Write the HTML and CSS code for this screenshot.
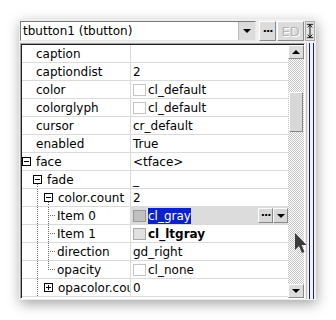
FILE: index.html
```html
<!DOCTYPE html>
<html lang="en">
<head>
  <meta charset="UTF-8">
  <title>Object inspector</title>
  <link rel="stylesheet" href="styles.css">
</head>
<body>
  <div class="desk">
    <div class="win">
      <div class="top">
        <div class="combo">
          <span class="combo-text">tbutton1 (tbutton)</span>
          <span class="combo-btn"><span class="tri-down"></span></span>
        </div>
        <span class="btn dots">&middot;&middot;&middot;</span>
        <span class="btn ed">ED</span>
        <span class="split-ico">
          <svg width="9" height="18" viewBox="0 0 9 18">
            <path d="M1 1.5h7M1 16.5h7M4.5 2v14M2 5l2.5-3 2.5 3M2 13l2.5 3 2.5-3" fill="none" stroke="#000" stroke-width="1"/>
          </svg>
        </span>
      </div>

      <div class="body">
        <div class="grid">
          <div class="rows">
            <div class="row"><div class="name"><span class="slot"></span><span class="txt">caption</span></div><div class="val"></div></div>
            <div class="row"><div class="name"><span class="slot"></span><span class="txt">captiondist</span></div><div class="val"><span class="txt">2</span></div></div>
            <div class="row"><div class="name"><span class="slot"></span><span class="txt">color</span></div><div class="val"><span class="sw"></span><span class="txt">cl_default</span></div></div>
            <div class="row"><div class="name"><span class="slot"></span><span class="txt">colorglyph</span></div><div class="val"><span class="sw"></span><span class="txt">cl_default</span></div></div>
            <div class="row"><div class="name"><span class="slot"></span><span class="txt">cursor</span></div><div class="val"><span class="txt">cr_default</span></div></div>
            <div class="row"><div class="name"><span class="slot"></span><span class="txt">enabled</span></div><div class="val"><span class="txt">True</span></div></div>
            <div class="row"><div class="name"><span class="slot"><span class="box minus"></span></span><span class="txt">face</span></div><div class="val"><span class="txt">&lt;tface&gt;</span></div></div>
            <div class="row"><div class="name"><span class="slot"></span><span class="slot down"><span class="box minus"></span></span><span class="txt">fade</span></div><div class="val"><span class="txt">_</span></div></div>
            <div class="row"><div class="name"><span class="slot"></span><span class="slot vl"></span><span class="slot down"><span class="box minus"></span></span><span class="txt">color.count</span></div><div class="val"><span class="txt">2</span></div></div>
            <div class="row"><div class="name"><span class="slot"></span><span class="slot vl"></span><span class="slot tee"></span><span class="txt leaf">Item 0</span></div>
              <div class="val sel"><span class="sw gray"></span><span class="txt hl">cl_gray</span><span class="fill"></span><span class="cbtn">&middot;&middot;&middot;</span><span class="cbtn"><span class="tri-down"></span></span></div></div>
            <div class="row"><div class="name"><span class="slot"></span><span class="slot vl"></span><span class="slot tee"></span><span class="txt leaf">Item 1</span></div><div class="val"><span class="sw ltgray"></span><span class="txt bold">cl_ltgray</span></div></div>
            <div class="row"><div class="name"><span class="slot"></span><span class="slot vl"></span><span class="slot tee"></span><span class="txt leaf">direction</span></div><div class="val"><span class="txt">gd_right</span></div></div>
            <div class="row"><div class="name"><span class="slot"></span><span class="slot vl"></span><span class="slot ell"></span><span class="txt leaf">opacity</span></div><div class="val"><span class="sw"></span><span class="txt">cl_none</span></div></div>
            <div class="row"><div class="name"><span class="slot"></span><span class="slot vl"></span><span class="slot"><span class="box plus"></span></span><span class="txt clip">opacolor.count</span></div><div class="val"><span class="txt">0</span></div></div>
          </div>
          <div class="vscroll">
            <span class="sbtn"><span class="tri-up"></span></span>
            <div class="track"><span class="thumb"></span></div>
            <span class="sbtn"><span class="tri-down"></span></span>
          </div>
        </div>
        <div class="splitter"></div>
      </div>
    </div>

    <svg class="cursor" width="12" height="22" viewBox="0 0 12 22">
      <path d="M0 0V17L4 13L7 20L9.5 19L6.5 12H11.5Z" fill="#3c3c3c"/>
    </svg>
  </div>
</body>
</html>
```

FILE: styles.css
```css
body {
  margin: 0;
  background: #ffffff;
  font-family: "DejaVu Sans", sans-serif;
  font-size: 12px;
  color: #000;
}

.desk {
  position: relative;
  width: 336px;
  height: 320px;
  padding: 19px 0 0 19px;
  box-sizing: border-box;
}

.win {
  width: 297px;
  height: 281px;
  box-sizing: border-box;
  padding: 2px 1px 1px 1px;
  background: #efefef;
  box-shadow: 1px 4px 12px rgba(0, 0, 0, 0.35);
  display: flex;
  flex-direction: column;
}

/* top bar */
.top {
  display: flex;
  height: 20px;
  gap: 1px;
}

.combo {
  width: 237px;
  box-sizing: border-box;
  display: flex;
  align-items: stretch;
  background: #fff;
  border: 1px solid;
  border-color: #7a7a7a #e8e8e8 #e8e8e8 #7a7a7a;
  margin-right: 2px;
}

.combo-text {
  flex: 1;
  padding-left: 2px;
  line-height: 18px;
}

.combo-btn {
  width: 16px;
  background: #dcdcdc;
  border-left: 1px solid #b8b8b8;
  display: flex;
  align-items: center;
  justify-content: center;
}

.tri-down,
.tri-up {
  width: 0;
  height: 0;
  border-left: 4px solid transparent;
  border-right: 4px solid transparent;
}

.tri-down {
  border-top: 4px solid #000;
}

.tri-up {
  border-bottom: 4px solid #000;
}

.btn {
  box-sizing: border-box;
  display: flex;
  align-items: center;
  justify-content: center;
  background: #dcdcdc;
  border: 1px solid;
  border-color: #fff #8a8a8a #8a8a8a #fff;
}

.dots {
  width: 17px;
  font-weight: bold;
  font-size: 11px;
  letter-spacing: -1px;
}

.ed {
  width: 27px;
  font-size: 13px;
  color: #b4b4b4;
  text-shadow: 1px 1px 0 #fff;
}

.split-ico {
  width: 10px;
  box-sizing: border-box;
  display: flex;
  align-items: center;
  justify-content: center;
  background: #e4e4e4;
  border: 1px solid #a8a8a8;
}

/* grid */
.body {
  flex: 1;
  display: flex;
  margin-top: 2px;
}

.grid {
  width: 285px;
  box-sizing: border-box;
  display: flex;
  border: 1px solid;
  border-color: #a0a0a0 #fff #fff #a0a0a0;
  box-shadow: inset 1px 1px 0 #202020;
  padding: 1px 0 0 1px;
}

.rows {
  width: 267px;
  background: #fff;
}

.row {
  display: flex;
  height: 17px;
  border-bottom: 1px solid #dadada;
}

.name {
  width: 108px;
  flex: none;
  display: flex;
  align-items: center;
  border-right: 1px solid #dadada;
  overflow: hidden;
  white-space: nowrap;
}

.slot {
  width: 11px;
  flex: none;
  align-self: stretch;
  display: flex;
  align-items: center;
}

.txt {
  margin-left: 3px;
}

.txt.leaf {
  margin-left: 2px;
}

.txt.clip {
  flex: 1;
  min-width: 0;
  overflow: hidden;
}

.vl {
  background: repeating-linear-gradient(#6e6e6e 0 1px, transparent 1px 2px) 4px 0 / 1px 100% no-repeat;
}

.down {
  background: repeating-linear-gradient(#6e6e6e 0 1px, transparent 1px 2px) 4px 13px / 1px 4px no-repeat;
}

.tee {
  background:
    repeating-linear-gradient(#6e6e6e 0 1px, transparent 1px 2px) 4px 0 / 1px 100% no-repeat,
    repeating-linear-gradient(90deg, #6e6e6e 0 1px, transparent 1px 2px) 6px 8px / 5px 1px no-repeat;
}

.ell {
  background:
    repeating-linear-gradient(#6e6e6e 0 1px, transparent 1px 2px) 4px 0 / 1px 9px no-repeat,
    repeating-linear-gradient(90deg, #6e6e6e 0 1px, transparent 1px 2px) 6px 8px / 5px 1px no-repeat;
}

.box {
  width: 9px;
  height: 9px;
  box-sizing: border-box;
  border: 1px solid #000;
  background:
    linear-gradient(#000, #000) 1px 3px / 5px 1px no-repeat,
    #fff;
}

.box.plus {
  background:
    linear-gradient(#000, #000) 1px 3px / 5px 1px no-repeat,
    linear-gradient(#000, #000) 3px 1px / 1px 5px no-repeat,
    #fff;
}

.val {
  flex: 1;
  display: flex;
  align-items: center;
  padding-left: 2px;
  white-space: nowrap;
}

.val .txt {
  margin-left: 0;
}

.sw {
  width: 13px;
  height: 12px;
  box-sizing: border-box;
  border: 1px solid #c4c4c4;
  background: #fff;
  margin-right: 2px;
}

.sw.gray {
  background: #c0c0c0;
  border-color: #9a9a9a;
}

.sw.ltgray {
  background: #e0e0e0;
  border-color: #a8a8a8;
}

.val.sel {
  background: #dcdcdc;
  padding-right: 0;
}

.txt.hl {
  background: #0a22c6;
  color: #fff;
  align-self: stretch;
  line-height: 16px;
  margin-top: 1px;
}

.txt.bold {
  font-weight: bold;
}

.fill {
  flex: 1;
}

.cbtn {
  width: 15px;
  height: 15px;
  box-sizing: border-box;
  display: flex;
  align-items: center;
  justify-content: center;
  background: #d8d8d8;
  border: 1px solid;
  border-color: #fff #888 #888 #fff;
  font-weight: bold;
  font-size: 11px;
  letter-spacing: -1px;
}

/* scrollbar */
.vscroll {
  width: 16px;
  display: flex;
  flex-direction: column;
}

.sbtn {
  height: 14px;
  box-sizing: border-box;
  display: flex;
  align-items: center;
  justify-content: center;
  background: #dcdcdc;
  border: 1px solid;
  border-color: #fff #888 #888 #fff;
}

.track {
  flex: 1;
  background: repeating-conic-gradient(#c4c4c4 0 25%, #fff 0 50%) 0 0 / 2px 2px;
}

.thumb {
  display: block;
  height: 40px;
  margin: 33px 1px 0 1px;
  box-sizing: border-box;
  background: #d8d8d8;
  border: 1px solid;
  border-color: #fff #888 #888 #fff;
}

.splitter {
  flex: 1;
  margin-left: 1px;
  border-left: 1px solid #bdbdbd;
  background:
    linear-gradient(#1c1c8c, #1c1c8c) 2px 0 / 1px 100% no-repeat,
    linear-gradient(#1c1c8c, #1c1c8c) 6px 0 / 1px 100% no-repeat,
    #f2f2f2;
}

.cursor {
  position: absolute;
  left: 295px;
  top: 233px;
}
```
